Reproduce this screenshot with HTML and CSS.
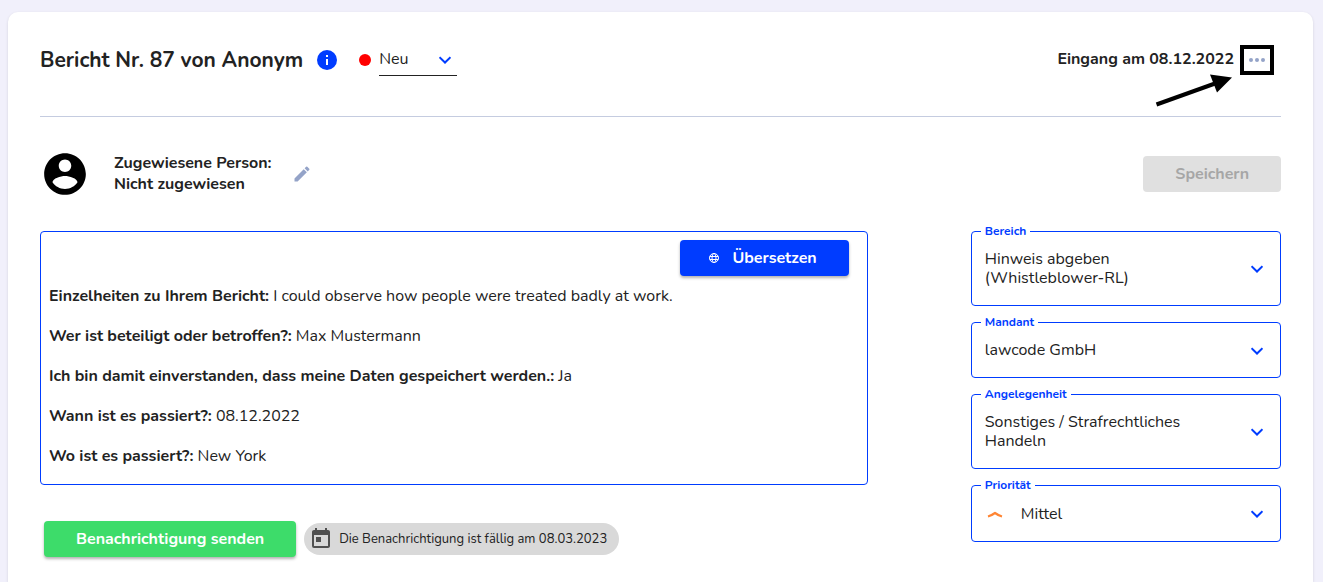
FILE: index.html
```html
<!DOCTYPE html>
<html lang="de">
<head>
<meta charset="utf-8">
<meta name="viewport" content="width=device-width, initial-scale=1">
<title>Bericht Nr. 87</title>
<link rel="stylesheet" href="styles.css">
</head>
<body>
<main class="card">
  <header class="header">
    <h1 class="title">Bericht Nr. 87 von Anonym</h1>
    <button class="icon-button info" type="button" aria-label="Information">
      <svg width="20" height="20" viewBox="0 0 20 20"><circle cx="10" cy="10" r="10" fill="#003cff"/><path d="M9 5h2v2H9zM9 9h2v6H9z" fill="#fff"/></svg>
    </button>
    <span class="status-dot"></span>
    <div class="status">
      <select class="select" aria-label="Status"><option>Neu</option></select>
      <svg class="chevron" width="12" height="8" viewBox="0 0 12 8"><path d="M.5 1.200l5.500 5.300 5.500-5.300"/></svg>
    </div>
    <div class="received">
      <span class="received-text">Eingang am 08.12.2022</span>
      <button class="more" type="button" aria-label="Weitere Aktionen">
        <svg width="16" height="4" viewBox="0 0 16 4" fill="#94a3c8"><circle cx="2" cy="2" r="2"/><circle cx="8" cy="2" r="2"/><circle cx="14" cy="2" r="2"/></svg>
      </button>
      <svg class="arrow" width="78" height="34" viewBox="0 0 78 34"><path d="M1.5 30.5L60 9.500" stroke="#000" stroke-width="4"/><path d="M77 3.500L55 .5l7 18z"/></svg>
    </div>
  </header>

  <section class="assignee">
    <svg width="50" height="50" viewBox="0 0 24 24"><path d="M12 2C6.480 2 2 6.480 2 12s4.480 10 10 10 10-4.480 10-10S17.520 2 12 2zm0 3c1.660 0 3 1.340 3 3s-1.340 3-3 3-3-1.340-3-3 1.340-3 3-3zm0 14.200c-2.500 0-4.710-1.280-6-3.220.03-1.990 4-3.080 6-3.080 1.990 0 5.970 1.090 6 3.080-1.290 1.940-3.500 3.220-6 3.220z"/></svg>
    <p class="assignee-text">Zugewiesene Person:<br>Nicht zugewiesen</p>
    <button class="icon-button" type="button" aria-label="Person bearbeiten">
      <svg width="20" height="20" viewBox="0 0 24 24" fill="#94a3c8"><path d="M3 17.250V21h3.750L17.810 9.940l-3.750-3.750L3 17.250zM20.710 7.040a1 1 0 0 0 0-1.410l-2.340-2.340a1 1 0 0 0-1.410 0l-1.830 1.830 3.750 3.750 1.830-1.830z"/></svg>
    </button>
    <button class="button save" type="button" disabled>Speichern</button>
  </section>

  <div class="content">
    <div class="left">
      <article class="report">
        <button class="button translate" type="button">
          <svg width="10" height="10" viewBox="0 0 10 10" fill="none" stroke="#fff"><circle cx="5" cy="5" r="4.500"/><ellipse cx="5" cy="5" rx="2" ry="4.500"/><path d="M.8 3.500h8.400M.8 6.500h8.400"/></svg>
          Übersetzen
        </button>
        <p><b>Einzelheiten zu Ihrem Bericht:</b> I could observe how people were treated badly at work.</p>
        <p><b>Wer ist beteiligt oder betroffen?:</b> Max Mustermann</p>
        <p><b>Ich bin damit einverstanden, dass meine Daten gespeichert werden.:</b> Ja</p>
        <p><b>Wann ist es passiert?:</b> 08.12.2022</p>
        <p><b>Wo ist es passiert?:</b> New York</p>
      </article>
      <div class="actions">
        <button class="button send" type="button">Benachrichtigung senden</button>
        <div class="chip">
          <svg width="24" height="24" viewBox="0 0 24 24" fill="#505050"><path d="M19 3h-1V1h-2v2H8V1H6v2H5c-1.110 0-1.990.9-1.990 2L3 19a2 2 0 0 0 2 2h14c1.100 0 2-.9 2-2V5c0-1.100-.9-2-2-2zm0 16H5V8h14v11zM7 10h5v5H7z"/></svg>
          <span>Die Benachrichtigung ist fällig am 08.03.2023</span>
        </div>
      </div>
    </div>

    <form class="fields">
      <div class="field">
        <label for="area">Bereich</label>
        <span class="value" aria-hidden="true">Hinweis abgeben (Whistleblower-RL)</span>
        <select class="overlay" id="area"><option>Hinweis abgeben (Whistleblower-RL)</option></select>
        <svg class="chevron" width="12" height="8" viewBox="0 0 12 8"><path d="M.5 1.200l5.500 5.300 5.500-5.300"/></svg>
      </div>
      <div class="field">
        <label for="client">Mandant</label>
        <select class="select" id="client"><option>lawcode GmbH</option></select>
        <svg class="chevron" width="12" height="8" viewBox="0 0 12 8"><path d="M.5 1.200l5.500 5.300 5.500-5.300"/></svg>
      </div>
      <div class="field">
        <label for="matter">Angelegenheit</label>
        <span class="value" aria-hidden="true">Sonstiges / Strafrechtliches Handeln</span>
        <select class="overlay" id="matter"><option>Sonstiges / Strafrechtliches Handeln</option></select>
        <svg class="chevron" width="12" height="8" viewBox="0 0 12 8"><path d="M.5 1.200l5.500 5.300 5.500-5.300"/></svg>
      </div>
      <div class="field">
        <label for="priority">Priorität</label>
        <svg class="priority" width="20" height="20" viewBox="0 0 20 20"><path d="M3 12.500q3.500-1 7-3.500 3.500 2.500 7 3.500" fill="none" stroke="#ff8533" stroke-width="2.200"/></svg>
        <select class="select" id="priority"><option>Mittel</option></select>
        <svg class="chevron" width="12" height="8" viewBox="0 0 12 8"><path d="M.5 1.200l5.500 5.300 5.500-5.300"/></svg>
      </div>
    </form>
  </div>
</main>
</body>
</html>
```
FILE: styles.css
```css
* { box-sizing: border-box; }

body {
  margin: 0;
  padding: 12px 10px 0 8px;
  min-height: 100vh;
  display: flex;
  flex-direction: column;
  background: #f1f0fb;
  color: #222;
  font: 16px/24px Nunito, "Open Sans", sans-serif;
}

button, select { font: inherit; color: inherit; }

svg { display: block; flex: none; }

p { margin: 0; }

.card {
  flex: 1;
  padding: 32px 32px 24px;
  background: #fff;
  border-radius: 10px 10px 0 0;
  box-shadow: 0 1px 3px rgba(0, 0, 0, 0.12);
}

.header {
  display: flex;
  align-items: center;
  padding-bottom: 40px;
  border-bottom: 1px solid #c5cce0;
}

.title {
  margin: 0 14px 0 0;
  font-size: 21px;
  line-height: 32px;
  font-weight: 700;
}

.icon-button {
  padding: 0;
  border: 0;
  background: none;
}

.status-dot {
  width: 12px;
  height: 12px;
  margin: 0 8px 0 22px;
  border-radius: 50%;
  background: #f00;
}

.status {
  display: flex;
  align-items: center;
  width: 78px;
  height: 32px;
  padding-right: 6px;
  border-bottom: 1px solid #222;
}

.select {
  flex: 1;
  min-width: 0;
  padding: 0;
  border: 0;
  background: none;
  appearance: none;
}

.status .select { padding-bottom: 2px; }

.chevron {
  fill: none;
  stroke: #003cff;
  stroke-width: 2;
}

.received {
  position: relative;
  display: flex;
  align-items: center;
  gap: 6px;
  margin: 0 7px 0 auto;
  font-weight: 700;
}

.received-text { padding-bottom: 2px; }

.more {
  display: flex;
  align-items: center;
  justify-content: center;
  width: 34px;
  height: 30px;
  padding: 0;
  border: 4px solid #000;
  background: #fff;
}

.arrow {
  position: absolute;
  top: 29px;
  right: 41px;
}

.assignee {
  display: flex;
  align-items: center;
  margin: 32px 0;
}

.assignee-text {
  margin: 0 20px 0 24px;
  line-height: 21px;
  font-weight: 700;
}

.button {
  height: 36px;
  padding: 0 32px;
  border: 0;
  border-radius: 4px;
  color: #fff;
  font-weight: 700;
  box-shadow: 0 2px 3px rgba(0, 0, 0, 0.3);
}

.save {
  margin-left: auto;
  background: #e0e0e0;
  color: #a6a6a6;
  box-shadow: none;
}

.content {
  display: flex;
  justify-content: space-between;
  align-items: flex-start;
}

.left { width: 66.7%; }

.report {
  display: flex;
  flex-direction: column;
  gap: 16px;
  padding: 8px 8px 16px;
  border: 1px solid #003cff;
  border-radius: 4px;
}

.translate {
  display: flex;
  align-items: center;
  align-self: flex-end;
  gap: 13px;
  margin: 0 10px -8px 0;
  padding: 0 32px 0 29px;
  background: #003cff;
}

.actions {
  display: flex;
  align-items: center;
  gap: 8px;
  margin: 36px 0 0 4px;
}

.send { background: #3ddc6a; }

.chip {
  display: flex;
  align-items: center;
  gap: 6px;
  height: 32px;
  padding: 0 12px 0 5px;
  border-radius: 16px;
  background: #d9d9d9;
  font-size: 13px;
}

.fields {
  display: flex;
  flex-direction: column;
  gap: 16px;
  width: 25%;
}

.field {
  position: relative;
  display: flex;
  align-items: center;
  padding: 18px 17px 17px 13px;
  border: 1px solid #003cff;
  border-radius: 4px;
  line-height: 19px;
}

.field label {
  position: absolute;
  top: -8px;
  left: 9px;
  padding: 0 4px;
  background: #fff;
  color: #003cff;
  font-size: 12px;
  line-height: 14px;
  font-weight: 700;
}

.value {
  flex: 1;
  padding-right: 48px;
}

.overlay {
  position: absolute;
  inset: 0;
  width: 100%;
  opacity: 0;
}

.priority { margin-right: 16px; }
```
